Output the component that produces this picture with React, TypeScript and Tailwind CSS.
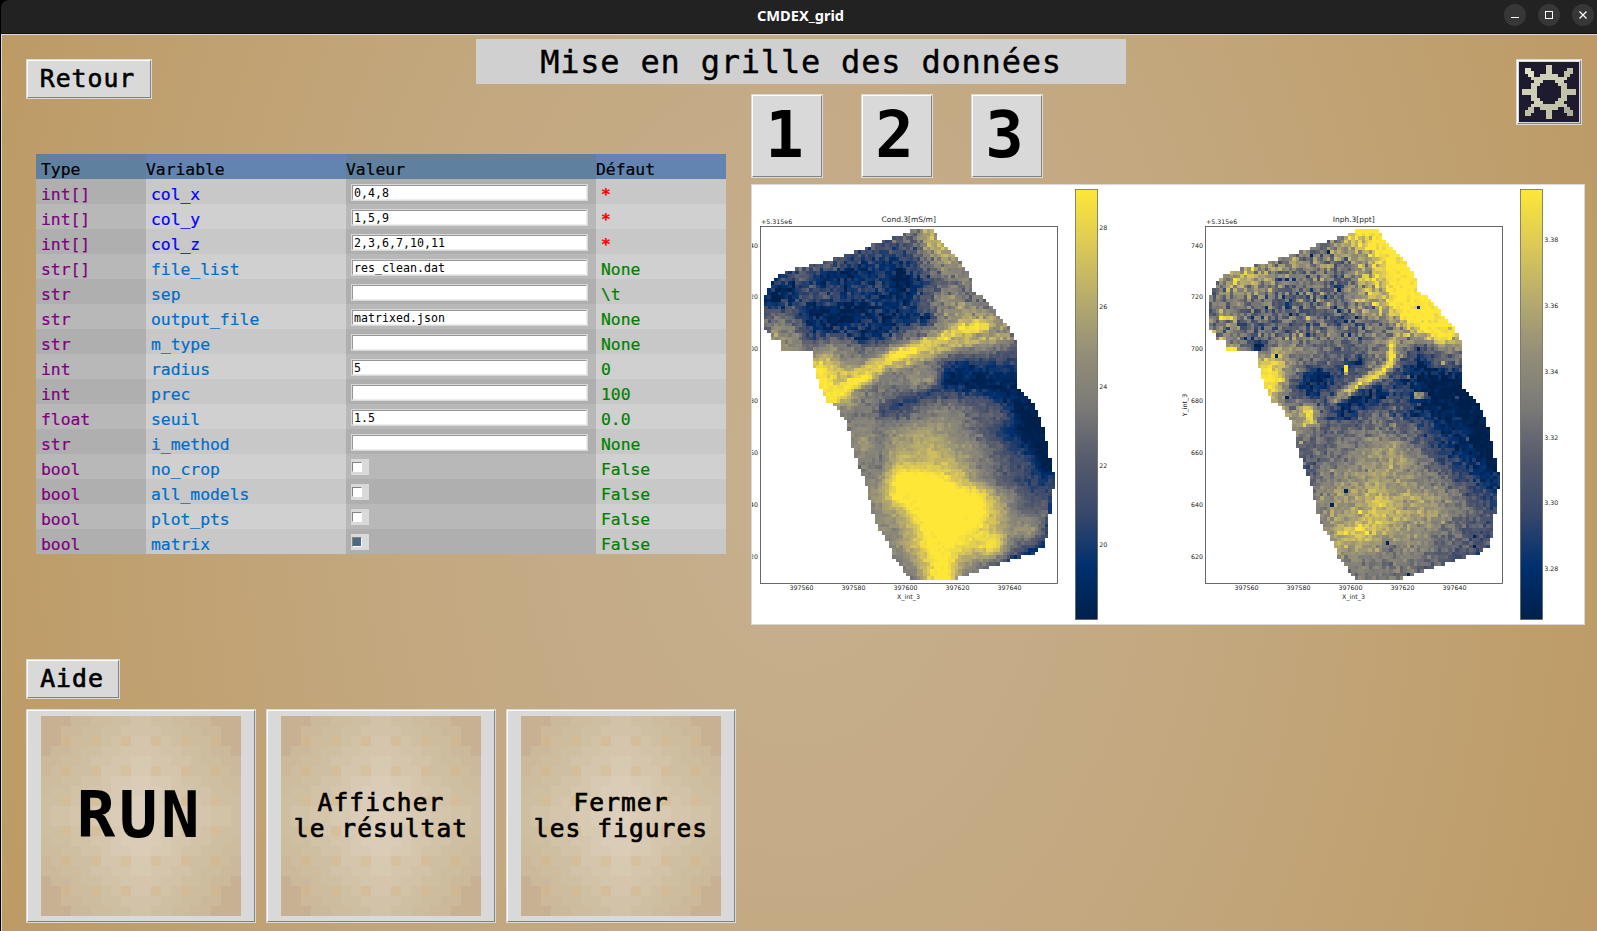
import React from 'react';

type RGB = [number, number, number];

const STOPS: RGB[] = [
  [0, 32, 76],
  [0, 48, 111],
  [57, 72, 107],
  [87, 92, 109],
  [124, 123, 120],
  [149, 143, 120],
  [184, 172, 108],
  [221, 202, 86],
  [254, 231, 55],
];

function colour(v: number): string {
  const t = Math.max(0, Math.min(1, v)) * 8;
  const i = Math.min(7, Math.floor(t));
  const f = t - i;
  const c = STOPS[i].map((a, k) => Math.round(a + (STOPS[i + 1][k] - a) * f));
  return `rgb(${c[0]},${c[1]},${c[2]})`;
}

/* Survey outline, in thirds of a pixel from the figure's own origin. */
const OUTLINE: [number, number][] = [
  [497, 148], [546, 148], [580, 190], [630, 245], [662, 292], [668, 330], [720, 375], [750, 410],
  [785, 455], [803, 500], [800, 540], [805, 620], [848, 670], [868, 710], [888, 770], [900, 830],
  [911, 880], [910, 960], [900, 1000], [896, 1050], [882, 1100], [850, 1120], [780, 1142], [700, 1168],
  [625, 1192], [600, 1200], [485, 1200], [455, 1165], [430, 1130], [410, 1080], [378, 1030], [365, 980],
  [347, 910], [322, 850], [303, 790], [295, 735], [260, 685], [228, 660], [208, 610], [190, 560],
  [193, 540], [180, 511], [98, 511], [98, 482], [68, 478], [43, 445], [42, 350], [70, 305],
  [100, 278], [160, 262], [240, 240], [330, 210], [400, 183],
];

function inside(x: number, y: number): boolean {
  let hit = false;
  for (let i = 0, j = OUTLINE.length - 1; i < OUTLINE.length; j = i++) {
    const [xi, yi] = OUTLINE[i];
    const [xj, yj] = OUTLINE[j];
    if (yi > y !== yj > y && x < ((xj - xi) * (y - yi)) / (yj - yi) + xi) hit = !hit;
  }
  return hit;
}

/* Coarse field samples, 50 units apart; "a" is the top of the scale. */
const COND = [
  '4444444445887777777',
  '3333333333786555555',
  '4444332213475555555',
  '2232112201345555555',
  '1023322212465445555',
  '3431101112467666666',
  '5641122134566666666',
  '5664654455666654333',
  '6668866655532222333',
  '8889965556641010111',
  '9999985544433321000',
  '5555555534565443000',
  '5555556567765421000',
  '5555557577876542100',
  '5555555588887543300',
  '55555556aaa98643222',
  '555555579aaaaa75333',
  '5555555679aaaa85455',
  '5555555668aaa986731',
  '5555555568aa9984311',
  '55555555569a7543333',
  '55555555559a5433333',
];

const INPH = [
  '555555555aaaaaaaaaa',
  '66666544689aaaaaaaa',
  '555656555689aaaaaaa',
  '668754453679aaaaaaa',
  '555544554779aaaaaaa',
  '555443444568aaaaaaa',
  '65444444445588a8888',
  '7751665444565356666',
  '9999964443552143333',
  'aaaaa41134531000000',
  '8888843342132100000',
  '6666667423442110000',
  '6666665444544311000',
  '4444444455675321000',
  '3333333556676532100',
  '4444444566766553211',
  '4444445677877765322',
  '4444445667887765433',
  '5555555689876654333',
  '5555555577656544333',
  '5555555555555443333',
  '5555555555555444333',
];

const cell = (c: string) => (c === 'a' ? 1.02 : Number(c) / 10);

function sample(grid: string[], x: number, y: number): number {
  const gx = Math.max(0, Math.min(17.99, (x - 40) / 50));
  const gy = Math.max(0, Math.min(20.99, (y - 150) / 50));
  const ix = Math.floor(gx);
  const iy = Math.floor(gy);
  const fx = gx - ix;
  const fy = gy - iy;
  const top = cell(grid[iy][ix]) * (1 - fx) + cell(grid[iy][ix + 1]) * fx;
  const bot = cell(grid[iy + 1][ix]) * (1 - fx) + cell(grid[iy + 1][ix + 1]) * fx;
  return top * (1 - fy) + bot * fy;
}

type Band = { pts: [number, number][]; width: number; value: number };

const COND_BANDS: Band[] = [
  { pts: [[235, 655], [300, 612], [350, 588], [400, 550], [440, 530], [490, 508], [540, 490], [600, 467], [650, 448], [700, 437]], width: 22, value: 0.9 },
  { pts: [[430, 528], [490, 512]], width: 18, value: 1.02 },
  { pts: [[640, 445], [700, 437]], width: 16, value: 0.98 },
  { pts: [[235, 655], [310, 608], [350, 590]], width: 16, value: 1 },
  { pts: [[212, 570], [222, 610]], width: 26, value: 1 },
  { pts: [[240, 585], [300, 580], [350, 565], [390, 545]], width: 13, value: 0.88 },
  { pts: [[440, 560], [500, 540], [560, 515], [620, 490], [700, 480], [770, 470]], width: 11, value: 0.76 },
  { pts: [[400, 695], [460, 668], [540, 640], [600, 620]], width: 19, value: 0.22 },
  { pts: [[600, 580], [650, 570]], width: 24, value: 0.05 },
  { pts: [[600, 600], [660, 605], [730, 620], [790, 640]], width: 25, value: 0.04 },
  { pts: [[800, 680], [840, 740], [870, 800], [885, 850]], width: 30, value: 0 },
  { pts: [[190, 390], [270, 410], [330, 390]], width: 24, value: 0.02 },
  { pts: [[70, 340], [120, 325]], width: 20, value: 0.03 },
  { pts: [[220, 300], [270, 290], [335, 268]], width: 18, value: 0.05 },
  { pts: [[440, 290], [450, 335]], width: 30, value: 0.02 },
  { pts: [[330, 470], [400, 455], [470, 410], [530, 415]], width: 18, value: 0.1 },
  { pts: [[480, 905], [560, 920], [620, 960]], width: 34, value: 1.04 },
  { pts: [[450, 950], [520, 1010], [570, 1110], [570, 1190]], width: 22, value: 1 },
  { pts: [[640, 1010], [660, 1030]], width: 28, value: 1 },
  { pts: [[735, 1085], [720, 1100]], width: 24, value: 0.98 },
  { pts: [[780, 1142], [880, 1100]], width: 9, value: 0.12 },
  { pts: [[905, 960], [893, 1040]], width: 7, value: 0.1 },
];

const INPH_BANDS: Band[] = [
  { pts: [[592, 485], [588, 545], [555, 580], [495, 608], [450, 640]], width: 12, value: 0.96 },
  { pts: [[450, 640], [410, 665]], width: 10, value: 0.6 },
  { pts: [[335, 690], [345, 718]], width: 14, value: 1 },
  { pts: [[440, 690], [490, 660], [550, 635]], width: 17, value: 0.08 },
  { pts: [[350, 620], [385, 590]], width: 24, value: 0.06 },
  { pts: [[440, 570], [500, 540]], width: 12, value: 0.12 },
  { pts: [[178, 500], [198, 500]], width: 9, value: 0 },
  { pts: [[590, 170], [590, 300], [640, 400], [740, 465]], width: 26, value: 1.02 },
  { pts: [[660, 647], [685, 647]], width: 6, value: 1 },
  { pts: [[453, 560], [453, 575]], width: 6, value: 1 },
  { pts: [[100, 507], [118, 507]], width: 6, value: 1 },
  { pts: [[80, 412], [110, 412]], width: 6, value: 1 },
  { pts: [[425, 712], [465, 712]], width: 6, value: 0 },
];

function bandDistance(b: Band, x: number, y: number): number {
  let best = Infinity;
  for (let i = 0; i + 1 < b.pts.length; i++) {
    const [x1, y1] = b.pts[i];
    const [x2, y2] = b.pts[i + 1];
    const dx = x2 - x1;
    const dy = y2 - y1;
    const t = Math.max(0, Math.min(1, ((x - x1) * dx + (y - y1) * dy) / (dx * dx + dy * dy)));
    best = Math.min(best, Math.hypot(x - x1 - t * dx, y - y1 - t * dy));
  }
  return best;
}

function rng(seed: number) {
  let s = seed;
  return () => {
    s = (s + 0x6d2b79f5) | 0;
    let t = Math.imul(s ^ (s >>> 15), 1 | s);
    t = (t + Math.imul(t ^ (t >>> 7), 61 | t)) ^ t;
    return ((t ^ (t >>> 14)) >>> 0) / 4294967296;
  };
}

const STEP = 10.4;
const LEVELS = 40;

function heatPaths(grid: string[], bands: Band[], rough: number, seed: number) {
  const rand = rng(seed);
  const d: string[] = Array(LEVELS + 1).fill('');
  for (let r = 0; r < 101; r++) {
    for (let c = 0; c < 84; c++) {
      const x = 42 + (c + 0.5) * STEP;
      const y = 148 + (r + 0.5) * STEP;
      const n = rand() + rand() + rand() - 1.5;
      const odd = rand();
      if (!inside(x, y)) continue;
      let v = sample(grid, x, y);
      for (const b of bands) {
        const q = bandDistance(b, x, y) / b.width;
        const w = Math.exp(-q * q);
        v = v * (1 - w) + b.value * w;
      }
      const upper = y < 480 ? 1.5 : y < 720 ? 0.9 : 0.7;
      v += n * rough * upper * (v > 0.95 || v < 0.02 ? 0.4 : 1);
      if (rough > 0.1 && odd > 0.992) v = odd > 0.996 ? 0.02 : v + 0.3;
      const k = Math.round(Math.max(0, Math.min(1, v)) * LEVELS);
      const px = ((42 + c * STEP) / 3).toFixed(2);
      const py = ((148 + r * STEP) / 3).toFixed(2);
      d[k] += `M${px} ${py}h3.6v3.6h-3.6z`;
    }
  }
  return d;
}

const COND_PATHS = heatPaths(COND, COND_BANDS, 0.1, 11);
const INPH_PATHS = heatPaths(INPH, INPH_BANDS, 0.18, 29);

type Tick = { at: number; label: string };

type PlotProps = {
  id: string;
  title: string;
  paths: string[];
  yTicks: Tick[];
  barTicks: Tick[];
  yLabel?: string;
};

function Plot({ id, title, paths, yTicks, barTicks, yLabel }: PlotProps) {
  const xTicks: Tick[] = [
    { at: 51.6, label: '397560' },
    { at: 103.6, label: '397580' },
    { at: 155.6, label: '397600' },
    { at: 207.6, label: '397620' },
    { at: 259.4, label: '397640' },
  ];
  return (
    <svg
      className="block h-[438px] w-[416px] shrink-0 overflow-visible"
      viewBox="2 5 416 438"
      fontFamily="'DejaVu Sans', sans-serif"
      fill="#222"
    >
      <defs>
        <linearGradient id={id} x1="0" y1="1" x2="0" y2="0">
          {STOPS.map((_, i) => (
            <stop key={i} offset={i / 8} stopColor={colour(i / 8)} />
          ))}
        </linearGradient>
      </defs>
      {paths.map((d, i) => d && <path key={i} d={d} fill={colour(i / LEVELS)} shapeRendering="crispEdges" />)}
      <rect x="10.5" y="46.5" width="297" height="357" fill="none" stroke="#444" strokeWidth="0.8" />
      <text x="11" y="44" fontSize="6.3">+5.315e6</text>
      <text x="158.7" y="42.4" fontSize="7.5" textAnchor="middle">{title}</text>
      {yTicks.map((t) => (
        <text key={t.label} x="8" y={t.at + 2.3} fontSize="6.3" textAnchor="end">{t.label}</text>
      ))}
      {xTicks.map((t) => (
        <text key={t.label} x={t.at} y="410.4" fontSize="6.3" textAnchor="middle">{t.label}</text>
      ))}
      <text x="158.5" y="419" fontSize="6.3" textAnchor="middle">X_int_3</text>
      {yLabel && (
        <text transform="translate(-8.2 225) rotate(-90)" fontSize="6.3" textAnchor="middle">{yLabel}</text>
      )}
      <rect x="325.5" y="9.5" width="22" height="430" fill={`url(#${id})`} stroke="#5b5a4a" strokeWidth="0.7" />
      {barTicks.map((t) => (
        <text key={t.label} x="349.3" y={t.at + 2.3} fontSize="6.3">{t.label}</text>
      ))}
    </svg>
  );
}

const Y_AT = [65.2, 117, 169, 220.8, 272.8, 324.5, 376.5];
const yTicks: Tick[] = ['740', '720', '700', '680', '660', '640', '620'].map((label, i) => ({ at: Y_AT[i], label }));
const condBar: Tick[] = ['28', '26', '24', '22', '20'].map((label, i) => ({ at: 47.8 + i * 79.2, label }));
const inphBar: Tick[] = ['3.38', '3.36', '3.34', '3.32', '3.30', '3.28'].map((label, i) => ({
  at: 59.5 + i * 65.9,
  label,
}));

function Figure() {
  return (
    <div className="mt-[6px] flex h-[441px] w-[834px] overflow-hidden border border-[#d9d9d9] bg-white">
      <div className="w-[445px] shrink-0 overflow-hidden">
        <Plot id="cond" title="Cond.3[mS/m]" paths={COND_PATHS} yTicks={yTicks} barTicks={condBar} />
      </div>
      <Plot id="inph" title="Inph.3[ppt]" paths={INPH_PATHS} yTicks={yTicks} barTicks={inphBar} yLabel="Y_int_3" />
    </div>
  );
}

const RAISED = 'border border-[#d9d9d9] bg-[#d9d9d9]';
const BEVEL = 'flex h-full w-full items-center justify-center border border-t-white border-l-white border-r-[#828282] border-b-[#828282]';

type Row = { type: string; name: string; value?: string; checked?: boolean; def: string };

const ROWS: Row[] = [
  { type: 'int[]', name: 'col_x', value: '0,4,8', def: '*' },
  { type: 'int[]', name: 'col_y', value: '1,5,9', def: '*' },
  { type: 'int[]', name: 'col_z', value: '2,3,6,7,10,11', def: '*' },
  { type: 'str[]', name: 'file_list', value: 'res_clean.dat', def: 'None' },
  { type: 'str', name: 'sep', value: '', def: '\\t' },
  { type: 'str', name: 'output_file', value: 'matrixed.json', def: 'None' },
  { type: 'str', name: 'm_type', value: '', def: 'None' },
  { type: 'int', name: 'radius', value: '5', def: '0' },
  { type: 'int', name: 'prec', value: '', def: '100' },
  { type: 'float', name: 'seuil', value: '1.5', def: '0.0' },
  { type: 'str', name: 'i_method', value: '', def: 'None' },
  { type: 'bool', name: 'no_crop', checked: false, def: 'False' },
  { type: 'bool', name: 'all_models', checked: false, def: 'False' },
  { type: 'bool', name: 'plot_pts', checked: false, def: 'False' },
  { type: 'bool', name: 'matrix', checked: true, def: 'False' },
];

function ParamTable() {
  return (
    <div className="ml-[10px] mt-[55px] w-[690px] text-[16.4px] leading-[19px] tracking-[-0.03px] [-webkit-text-stroke:0.2px_currentColor]">
      <div className="grid h-[25px] grid-cols-[110px_200px_250px_130px] text-black">
        <div className="bg-[#5f819f] pl-[5px] pt-[6px]">Type</div>
        <div className="bg-[#6384b0] pt-[6px]">Variable</div>
        <div className="bg-[#5f819f] pt-[6px]">Valeur</div>
        <div className="bg-[#6384b0] pt-[6px]">Défaut</div>
      </div>
      {ROWS.map((r, i) => {
        const dark = i % 2 ? 'bg-[#b8b8b8]' : 'bg-[#afafaf]';
        const light = i % 2 ? 'bg-[#d0d0d0]' : 'bg-[#c8c8c8]';
        return (
          <div key={r.name} className="grid h-[25px] grid-cols-[110px_200px_250px_130px]">
            <div className={`${dark} pl-[5px] pt-[6px] text-[#800080]`}>{r.type}</div>
            <div className={`${light} pl-[5px] pt-[6px] ${r.def === '*' ? 'text-[#0000ff]' : 'text-[#006ecb]'}`}>
              {r.name}
            </div>
            <div className={`${dark} pl-[5px] pt-[5px]`}>
              {r.value !== undefined ? (
                <div className="h-[17px] w-[237px] border border-[#d9d9d9] bg-white">
                  <div className="h-[15px] border border-t-[#969696] border-l-[#969696] border-r-[#ececec] border-b-[#ececec] pl-px text-[11.6px] leading-[14px] tracking-[0.02px] text-black [-webkit-text-stroke:0]">
                    {r.value}
                  </div>
                </div>
              ) : (
                <div className="h-4 w-[18px] bg-[#d9d9d9] pl-px pt-[3px]">
                  <div
                    className={`size-[10px] border border-t-[#828282] border-l-[#828282] border-r-white border-b-white ${
                      r.checked ? 'bg-[#4a6984]' : 'bg-white'
                    }`}
                  />
                </div>
              )}
            </div>
            <div className={`${light} pl-[5px] pt-[6px] ${r.def === '*' ? 'font-bold text-[#ff0000]' : 'text-[#008000]'}`}>
              {r.def}
            </div>
          </div>
        );
      })}
    </div>
  );
}

const TILE_STOPS: RGB[] = [
  [221, 207, 188],
  [207, 191, 162],
  [200, 177, 146],
];

const TILE: { x: number; y: number; fill: string }[] = [];
for (let y = 0; y < 20; y++) {
  for (let x = 0; x < 20; x++) {
    const dx = Math.abs(x - 9.5);
    const dy = Math.abs(y - 9.5);
    const s = Math.floor((dx * 1.1 + dy * 0.9) / 2);
    const t = s >= 8 ? 2 : s < 5 ? s / 5 : 1 + (s - 5) * 0.2;
    const k = Math.min(1, Math.floor(t));
    let c = TILE_STOPS[k].map((a, j) => a + (TILE_STOPS[k + 1][j] - a) * (t - k));
    const dot = x % 3 === 2 && y % 3 === 2 && !(dx < 3 && dy < 3);
    if (dot) c = [c[0] * 0.55 + 97, c[1] * 0.55 + 82, c[2] * 0.55 + 60];
    TILE.push({ x, y, fill: `rgb(${c.map(Math.round).join(',')})` });
  }
}

function TileButton({ children, big }: { children: React.ReactNode; big?: boolean }) {
  return (
    <button className={`h-[214px] w-[230px] ${RAISED}`}>
      <span className={BEVEL}>
        <span className="grid size-[200px]">
          <svg className="col-start-1 row-start-1 size-[200px]" viewBox="0 0 20 20" shapeRendering="crispEdges">
            {TILE.map((t) => (
              <rect key={`${t.x}-${t.y}`} x={t.x} y={t.y} width="1" height="1" fill={t.fill} />
            ))}
          </svg>
          <span
            className={`col-start-1 row-start-1 flex flex-col items-center justify-center whitespace-nowrap ${
              big
                ? 'pr-[2px] pb-[2px] text-[64px] leading-[64px] font-bold tracking-[3.6px]'
                : 'text-[24.5px] leading-[26px] tracking-[1.1px] [-webkit-text-stroke:0.7px_black]'
            }`}
          >
            {children}
          </span>
        </span>
      </span>
    </button>
  );
}

const SUN = [
  '....................',
  '.........##.........',
  '..##.....##.....##..',
  '..###....##....###..',
  '...##..######..##...',
  '....############....',
  '.....###....###.....',
  '....###......###....',
  '....##........##....',
  '.#####........#####.',
  '.#####........#####.',
  '....##........##....',
  '....###......###....',
  '.....###....###.....',
  '....############....',
  '...##..######..##...',
  '..###....##....###..',
  '..##.....##.....##..',
  '.........##.........',
  '....................',
];

function sunFill(x: number, y: number): string {
  const diagonal = (x < 5 || x > 14) && (y < 5 || y > 14);
  if (diagonal && x < 5 && y < 5) return '#e2e1c8';
  if (diagonal && x > 14 && y > 14) return '#adac9c';
  if (diagonal) return '#bfbfa8';
  return x + y > 20 ? '#c3c2aa' : '#cfceb6';
}

function SunIcon() {
  return (
    <svg className="size-[60px]" viewBox="0 0 20 20" shapeRendering="crispEdges">
      <rect width="20" height="20" fill="#1e1b2e" />
      {SUN.flatMap((row, y) =>
        [...row].map((c, x) =>
          c === '#' ? <rect key={`${x}-${y}`} x={x} y={y} width="1" height="1" fill={sunFill(x, y)} /> : null,
        ),
      )}
    </svg>
  );
}

function TitleBar() {
  return (
    <header className="grid h-[34px] grid-cols-[1fr_auto_1fr] items-center rounded-tl-lg border-b border-[#120c18] bg-[#222222]">
      <span />
      <span className="pb-[3px] pl-[3px] font-['Noto_Sans'] text-[14.6px] leading-[18px] font-bold text-white">
        CMDEX_grid
      </span>
      <span className="flex justify-end gap-3 pr-[3px] pb-[3px]">
        <span className="flex size-[22px] items-center justify-center rounded-full bg-[#373737]">
          <span className="mt-[5px] h-px w-2 bg-white" />
        </span>
        <span className="flex size-[22px] items-center justify-center rounded-full bg-[#373737]">
          <span className="size-2 border border-white" />
        </span>
        <span className="flex size-[22px] items-center justify-center rounded-full bg-[#373737]">
          <svg className="size-2" viewBox="0 0 8 8" stroke="white" strokeWidth="1.2">
            <path d="M0.5 0.5L7.5 7.5M7.5 0.5L0.5 7.5" />
          </svg>
        </span>
      </span>
    </header>
  );
}

export default function App() {
  return (
    <div className="flex h-[931px] w-[1597px] flex-col overflow-hidden border-l border-black bg-black font-['DejaVu_Sans_Mono',monospace] text-black">
      <TitleBar />
      <main className="flex flex-1 flex-col border-t border-l border-[#d9d9d9] bg-[radial-gradient(ellipse_1050px_1570px_at_50%_50%,#c7b08f_0%,#c3a880_38%,#be9d69_74%,#bd9b67_79%,#c09966_82%)]">
        <div className="flex h-[877px]">
          <div className="flex w-[749px] shrink-0 flex-col pl-6 pt-6">
            <button className={`h-10 w-[126px] shrink-0 ${RAISED}`}>
              <span className={`${BEVEL} pr-[3px] pb-px text-[24.8px] tracking-[1px] [-webkit-text-stroke:0.6px_black]`}>
                Retour
              </span>
            </button>
            <ParamTable />
            <button className={`mt-[105px] h-10 w-[94px] shrink-0 ${RAISED}`}>
              <span className={`${BEVEL} pr-[2px] pb-px text-[24.8px] tracking-[1px] [-webkit-text-stroke:0.7px_black]`}>
                Aide
              </span>
            </button>
            <div className="mt-[10px] flex gap-[10px]">
              <TileButton big>RUN</TileButton>
              <TileButton>
                <span>Afficher</span>
                <span>le résultat</span>
              </TileButton>
              <TileButton>
                <span>Fermer</span>
                <span>les figures</span>
              </TileButton>
            </div>
          </div>
          <div className="flex flex-1 flex-col">
            <div className="flex">
              <div>
                <h1 className="-ml-[275px] mt-1 flex h-[45px] w-[650px] items-center justify-center bg-[#d0d0d0] text-[32px] tracking-[0.8px] [-webkit-text-stroke:0.4px_black]">
                  Mise en grille des données
                </h1>
                <div className="mt-[10px] flex gap-[38px]">
                  {['1', '2', '3'].map((n) => (
                    <button key={n} className={`h-[84px] w-[72px] ${RAISED}`}>
                      <span className={`${BEVEL} pr-[5px] pb-[2px] text-[64px] leading-none font-bold`}>{n}</span>
                    </button>
                  ))}
                </div>
              </div>
              <button className={`ml-auto mr-[15px] mt-6 size-[66px] ${RAISED}`}>
                <span className={BEVEL}>
                  <SunIcon />
                </span>
              </button>
            </div>
            <Figure />
          </div>
        </div>
      </main>
    </div>
  );
}
